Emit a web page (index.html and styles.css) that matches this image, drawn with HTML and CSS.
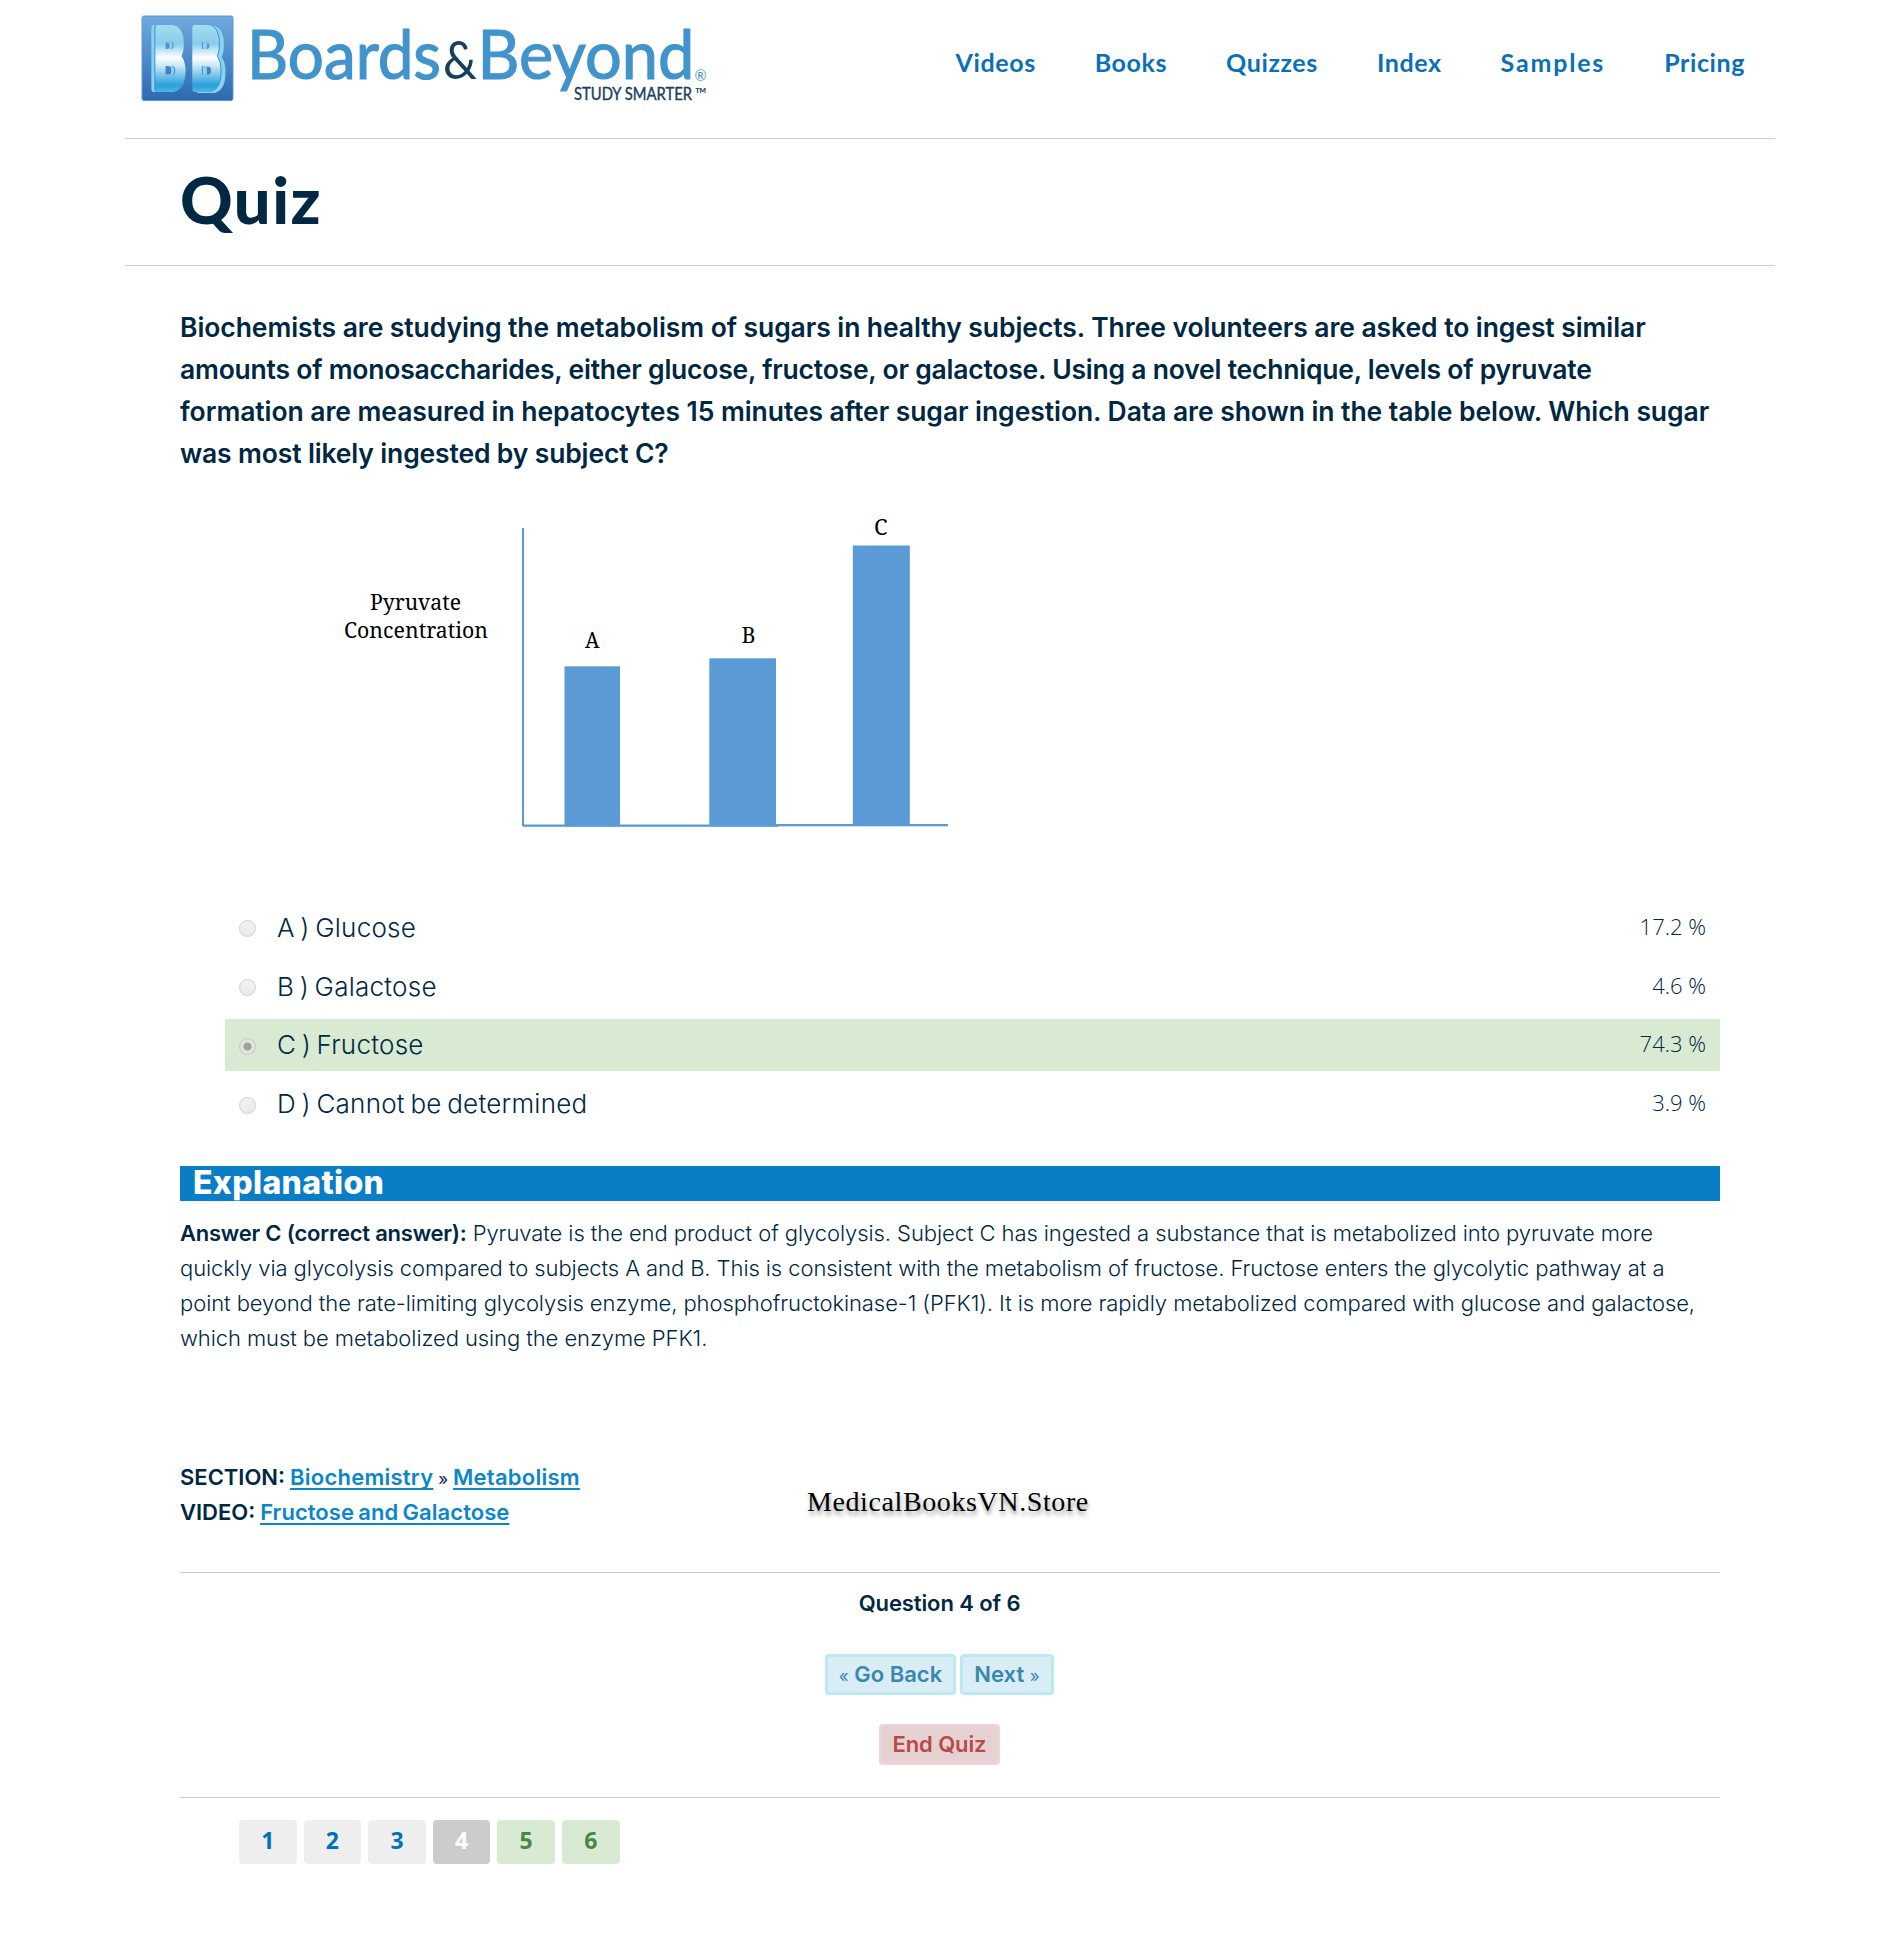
FILE: index.html
```
<!DOCTYPE html>
<html lang="en">
<head>
<meta charset="utf-8">
<title>Quiz - Boards&amp;Beyond</title>
<link rel="stylesheet" href="styles.css">
</head>
<body>
<div class="page">
  <header class="header">
    <svg class="logo" width="574" height="110" viewBox="0 0 574 110" role="img">
      <defs>
        <linearGradient id="tile" x1="0" y1="0" x2="0" y2="1">
          <stop offset="0" stop-color="#71aade"/><stop offset=".5" stop-color="#4c8bca"/><stop offset="1" stop-color="#2c69b0"/>
        </linearGradient>
        <linearGradient id="face" gradientUnits="userSpaceOnUse" x1="0" y1="23" x2="0" y2="92">
          <stop offset="0" stop-color="#a5dff2"/><stop offset=".3" stop-color="#8accea"/><stop offset=".5" stop-color="#fff"/><stop offset=".62" stop-color="#c9e8f7"/><stop offset=".9" stop-color="#2a9fdb"/><stop offset="1" stop-color="#4fb6e4"/>
        </linearGradient>
      </defs>
      <rect x="17" y="16" width="91" height="84.500" rx="2" fill="url(#tile)" stroke="#5f98cf" stroke-width="1"/>
      <g class="mark" fill="url(#face)" stroke="url(#face)" stroke-width="8">
        <text class="left" x="29.500" y="87.500" textLength="31" lengthAdjust="spacingAndGlyphs">B</text>
        <text class="right" x="66.500" y="88" textLength="29" lengthAdjust="spacingAndGlyphs">B</text>
      </g>
      <text class="word" x="122" y="78.500" textLength="194" lengthAdjust="spacingAndGlyphs">Boards</text>
      <text class="amp" x="318" y="78.500" textLength="34" lengthAdjust="spacingAndGlyphs">&amp;</text>
      <text class="word" x="352.500" y="78.500" textLength="217" lengthAdjust="spacingAndGlyphs">Beyond</text>
      <text class="reg" x="569.500" y="81" textLength="12" lengthAdjust="spacingAndGlyphs">®</text>
      <text class="tag" x="449" y="100" textLength="118" lengthAdjust="spacingAndGlyphs">STUDY SMARTER</text>
      <text class="tm" x="570" y="100" textLength="12" lengthAdjust="spacingAndGlyphs">™</text>
    </svg>
    <nav class="nav">
      <a>Videos</a><a>Books</a><a>Quizzes</a><a>Index</a><a class="wide">Samples</a><a>Pricing</a>
    </nav>
  </header>
  <div class="title"><h1>Quiz</h1></div>
  <main class="content">
    <p class="question">
      <span class="q1">Biochemists are studying the metabolism of sugars in healthy subjects. Three volunteers are asked to ingest similar</span>
      <span class="q2">amounts of monosaccharides, either glucose, fructose, or galactose. Using a novel technique, levels of pyruvate</span>
      <span class="q3">formation are measured in hepatocytes 15 minutes after sugar ingestion. Data are shown in the table below. Which sugar</span>
      <span class="q4">was most likely ingested by subject C?</span>
    </p>
    <svg class="chart" width="780" height="340" viewBox="180 500 780 340" role="img">
      <g fill="#5b9bd5">
        <rect x="522" y="528" width="2" height="298"/>
        <rect x="564.500" y="666.300" width="55.500" height="160"/>
        <rect x="709.300" y="658.300" width="66.700" height="168"/>
        <rect x="852.800" y="545.500" width="57" height="280.500"/>
        <rect x="523" y="824.500" width="255" height="2.300"/>
        <rect x="776" y="824" width="172" height="2.300"/>
      </g>
      <g class="chart-text">
        <text x="370" y="610" textLength="91" lengthAdjust="spacingAndGlyphs">Pyruvate</text>
        <text x="344" y="638" textLength="144" lengthAdjust="spacingAndGlyphs">Concentration</text>
        <text x="585" y="647.500" textLength="14.500" lengthAdjust="spacingAndGlyphs">A</text>
        <text x="741.500" y="643" textLength="14" lengthAdjust="spacingAndGlyphs">B</text>
        <text x="874" y="534.500" textLength="13.500" lengthAdjust="spacingAndGlyphs">C</text>
      </g>
    </svg>
    <ul class="options">
      <li><i class="radio"></i><span>A ) Glucose</span><b>17.2 %</b></li>
      <li><i class="radio"></i><span>B ) Galactose</span><b>4.6 %</b></li>
      <li class="correct"><i class="radio checked"></i><span>C ) Fructose</span><b>74.3 %</b></li>
      <li class="last"><i class="radio"></i><span>D ) Cannot be determined</span><b>3.9 %</b></li>
    </ul>
    <h2>Explanation</h2>
    <p class="explanation">
      <span class="e1"><strong>Answer C (correct answer):</strong> Pyruvate is the end product of glycolysis. Subject C has ingested a substance that is metabolized into pyruvate more</span>
      <span class="e2">quickly via glycolysis compared to subjects A and B. This is consistent with the metabolism of fructose. Fructose enters the glycolytic pathway at a</span>
      <span class="e3">point beyond the rate-limiting glycolysis enzyme, phosphofructokinase-1 (PFK1). It is more rapidly metabolized compared with glucose and galactose,</span>
      <span class="e4">which must be metabolized using the enzyme PFK1.</span>
    </p>
    <div class="source">
      <div class="refs">
        <div><strong>SECTION:</strong> <a>Biochemistry</a> <small>»</small> <a>Metabolism</a></div>
        <div><strong>VIDEO:</strong> <a class="video">Fructose and Galactose</a></div>
      </div>
      <div class="store">MedicalBooksVN.Store</div>
    </div>
    <div class="controls">
      <div class="counter">Question 4 of 6</div>
      <div class="buttons">
        <a class="btn back"><small>«</small> Go Back</a>
        <a class="btn next">Next <small>»</small></a>
      </div>
      <a class="btn end">End Quiz</a>
    </div>
    <div class="pager">
      <a>1</a><a>2</a><a>3</a><a class="current">4</a><a class="done">5</a><a class="done">6</a>
    </div>
  </main>
</div>
</body>
</html>
```
FILE: styles.css
```
* { box-sizing: border-box; }
body {
  margin: 0;
  background: #fff;
  color: #002843;
  font: 22px/35px Inter, "Liberation Sans", sans-serif;
}
h1, h2, p, ul { margin: 0; padding: 0; }
.page { width: 1650px; margin-left: 125px; }

.header {
  display: flex;
  justify-content: space-between;
  height: 139px;
  border-bottom: 1px solid #ccc;
}
.logo { display: block; overflow: visible; }
.mark { font: bold 86px "Liberation Sans", sans-serif; stroke-linejoin: round; }
.left { filter: drop-shadow(-1px 0 0 #2b97d6) drop-shadow(-3px 0 0 #8fd0ee); }
.right { filter: drop-shadow(1px 0 0 #2b97d6) drop-shadow(4px 1px 0 #8fd0ee); }
.word { font: 68px Lato, sans-serif; fill: #4094cb; stroke: #4094cb; stroke-width: 1.2; }
.amp { font: 52px Lato, sans-serif; fill: #17405c; }
.reg { font: 15px Lato, sans-serif; fill: #4094cb; }
.tag { font: 17.5px Lato, sans-serif; fill: #17405c; stroke: #17405c; stroke-width: .4; }
.tm { font: 17px Lato, sans-serif; fill: #17405c; }
.nav {
  display: flex;
  gap: 59px;
  padding: 45px 30px 0 0;
  font: 700 25px/35px Lato, sans-serif;
  letter-spacing: .6px;
  color: #0a70b8;
}
.nav .wide { letter-spacing: 1.8px; }

.title { height: 127px; padding: 22px 55px 0; border-bottom: 1px solid #ccc; }
h1 { font: 900 65px/76px Lato, sans-serif; letter-spacing: 1.5px; }

.content { width: 1595px; padding: 40px 0 0 55px; }
.question { font-size: 26.5px; line-height: 42px; font-weight: 600; }
.question span, .explanation span { display: block; white-space: nowrap; }
.q1 { letter-spacing: -.08px; }
.q2 { letter-spacing: -.22px; }
.q3 { letter-spacing: -.065px; }
.q4 { letter-spacing: -.15px; }

.chart { display: block; margin-top: 26px; }
.chart-text { font: 22.5px "Noto Serif", "Liberation Serif", serif; fill: #000; }

.options {
  display: flex;
  flex-direction: column;
  gap: 7px;
  margin: 61px 0 0 45px;
  list-style: none;
}
.options li {
  display: flex;
  align-items: center;
  height: 52px;
  padding: 0 14px;
}
.options li.correct { background: #d9ead3; }
.options span {
  margin: 0 auto 0 21px;
  font-size: 26px;
  font-weight: 300;
  letter-spacing: .25px;
  word-spacing: -2px;
}
.options .correct span, .options .last span { padding-bottom: 2px; }
.options b { padding-bottom: 2px; font: 350 22px/35px "Open Sans", sans-serif; }
.options .correct b, .options .last b { padding-bottom: 4px; }
.radio {
  width: 17px;
  height: 17px;
  margin-top: 3px;
  border: 1px solid #d0d0d0;
  border-radius: 50%;
  background: linear-gradient(#f2f2f2, #e9e9e9);
}
.radio.checked {
  border-color: #c3cbbf;
  background: radial-gradient(circle, #9ca39a 0 3.6px, #dfe5dc 4.4px);
}

h2 {
  height: 35px;
  margin-top: 36px;
  padding-left: 13px;
  background: #097dc6;
  color: #fff;
  font: 800 32px/34px Inter, sans-serif;
  letter-spacing: .35px;
}
.explanation { margin-top: 15px; font-weight: 300; }
.e1, .e2, .e3, .e4 { letter-spacing: -.08px; }
.e1 strong { letter-spacing: -.23px; }
strong { font-weight: 600; }

.source { display: flex; height: 113px; margin-top: 104px; border-bottom: 1px solid #ccc; }
.refs { width: 627px; word-spacing: -1.3px; }
.refs a {
  color: #0a86cc;
  font-weight: 600;
  letter-spacing: .25px;
  text-decoration: underline;
  text-decoration-thickness: 2px;
  text-underline-offset: 3px;
  text-decoration-skip-ink: none;
}
.refs .video { letter-spacing: .05px; }
small { font-size: 17px; font-weight: 400; line-height: 1; }
.store {
  padding-top: 24px;
  font: 28px/35px "Liberation Serif", serif;
  letter-spacing: .6px;
  color: #000;
  text-shadow: 1px 4px 4px rgba(0, 0, 0, .4);
}

.controls {
  display: flex;
  flex-direction: column;
  align-items: center;
  height: 225px;
  padding: 13px 21px 0 0;
  border-bottom: 1px solid #ccc;
  font-weight: 600;
}
.counter { letter-spacing: -.1px; }
.buttons { display: flex; gap: 4px; margin: 33px 0 29px; }
.btn {
  height: 41px;
  border: 3px solid #bce8f1;
  border-radius: 4px;
  background: #d9edf7;
  color: #3a87ad;
  line-height: 34px;
  text-align: center;
}
.back { width: 131px; }
.next { width: 94px; }
.end { width: 121px; border-color: #eed3d7; background: #e6d1d2; color: #b94a48; letter-spacing: -.1px; }

.pager { display: flex; gap: 7px; padding: 22px 0 0 59px; }
.pager a {
  width: 57.6px;
  height: 44px;
  border-radius: 4px;
  background: #eee;
  color: #0072bc;
  font: 700 23px/41px "Open Sans", sans-serif;
  text-align: center;
}
.pager .current { background: #ccc; color: #fff; }
.pager .done { background: #d9ead3; color: #468847; }
```
